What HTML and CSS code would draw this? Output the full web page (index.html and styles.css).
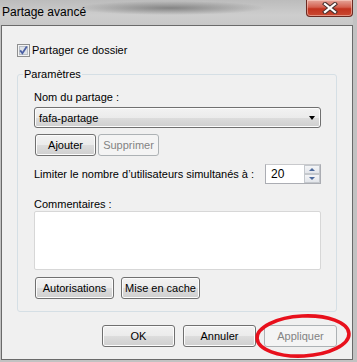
FILE: index.html
```html
<!DOCTYPE html>
<html>
<head lang="fr">
    <meta charset="UTF-8">
    <title>Partage avancé</title>
    <link rel="stylesheet" href="styles.css">
</head>
<body>
<div class="window">
    <div class="titlebar">
        <span class="title">Partage avancé</span>
        <span class="close">
            <svg width="16" height="12" viewBox="0 0 16 12">
                <path d="M3 2 L13 10 M13 2 L3 10" stroke="#4a3330" stroke-width="4.2" stroke-linecap="square"/>
                <path d="M3 2 L13 10 M13 2 L3 10" stroke="#ffffff" stroke-width="2.2" stroke-linecap="square"/>
            </svg>
        </span>
    </div>
    <div class="panel">
        <label class="check-row">
            <span class="checkbox">
                <svg width="13" height="13" viewBox="0 0 13 13">
                    <rect x="0.5" y="0.5" width="12" height="12" fill="#f4f4f4" stroke="#8e8f8f"/>
                    <rect x="2.5" y="2.5" width="8" height="8" fill="#dfe3e8" stroke="#b8bec6"/>
                    <path d="M3.2 6.4 L5.4 9.2 L9.8 2.6" fill="none" stroke="#4c61a5" stroke-width="1.8"/>
                </svg>
            </span>
            Partager ce dossier
        </label>
        <fieldset class="group">
            <legend>Paramètres</legend>
            <div class="group-body">
                <div class="label">Nom du partage :</div>
                <div class="select">
                    <span>fafa-partage</span>
                    <span class="arrow"></span>
                </div>
                <div class="btn-row">
                    <span class="btn small">Ajouter</span>
                    <span class="btn small disabled">Supprimer</span>
                </div>
                <div class="limit-row">
                    <span>Limiter le nombre d’utilisateurs simultanés à :</span>
                    <div class="spin">
                        <span class="spin-value">20</span>
                        <span class="spin-btns">
                            <span class="spin-up"><i></i></span>
                            <span class="spin-down"><i></i></span>
                        </span>
                    </div>
                </div>
                <div class="label comments-label">Commentaires :</div>
                <div class="textarea"></div>
                <div class="btn-row wide">
                    <span class="btn mid">Autorisations</span>
                    <span class="btn mid">Mise en cache</span>
                </div>
            </div>
        </fieldset>
        <div class="footer">
            <span class="btn big">OK</span>
            <span class="btn big">Annuler</span>
            <span class="btn big disabled">Appliquer</span>
        </div>
    </div>
    <svg class="circle" width="104" height="52" viewBox="0 0 104 52">
        <ellipse cx="51" cy="25" rx="46" ry="20" transform="rotate(-3 51 25)" fill="none" stroke="#e8101c" stroke-width="3.6"/>
    </svg>
</div>
</body>
</html>
```

FILE: styles.css
```css
* {
    margin: 0;
    padding: 0;
    box-sizing: border-box;
}

body {
    background: #c4c4c4;
    font-family: "Liberation Sans", Arial, sans-serif;
    font-size: 11px;
    color: #000000;
    white-space: nowrap;
}

.window {
    position: relative;
    width: 357px;
    height: 362px;
    padding-right: 4px;
    background: #c2c2c2;
    overflow: hidden;
}

.titlebar {
    height: 25px;
    display: flex;
    justify-content: space-between;
    align-items: flex-start;
    background: radial-gradient(ellipse 95px 7px at 170px 8px, rgba(110, 110, 110, 0.75), rgba(110, 110, 110, 0)),
                linear-gradient(#bcbcbc, #cdcdcd 60%, #c8c8c8);
}

.title {
    padding: 5px 0 0 2px;
    line-height: 15px;
    font-size: 12px;
}

.close {
    width: 47px;
    height: 17px;
    display: flex;
    align-items: center;
    justify-content: center;
    border: 1px solid #6b2a22;
    border-top: none;
    border-radius: 0 0 4px 4px;
    background: linear-gradient(#e6a59a, #d4604f 45%, #c2331f 55%, #c94a33);
    box-shadow: inset 0 0 0 1px rgba(255, 220, 210, 0.5);
}

.panel {
    margin-left: 1px;
    width: 352px;
    height: 335px;
    border: 1px solid #6a6a6a;
    background: #f0f0f0;
    padding: 17px 15px 0 15px;
}

.check-row {
    display: flex;
    align-items: center;
    height: 15px;
    line-height: 15px;
}

.checkbox {
    width: 13px;
    height: 13px;
    margin-right: 2px;
    display: flex;
}

.group {
    margin-top: 8px;
    width: 320px;
    border: 1px solid #d5dfe5;
    border-radius: 3px;
    padding: 0 0 0 5px;
}

.group legend {
    padding: 0 1px;
    line-height: 16px;
}

.group-body {
    padding: 0 0 12px 11px;
}

.label {
    margin-top: 8px;
    line-height: 15px;
}

.select {
    margin-top: 2px;
    width: 287px;
    height: 21px;
    border: 1px solid #707070;
    border-radius: 3px;
    background: linear-gradient(#f2f2f2, #ebebeb 50%, #dddddd 50%, #cfcfcf);
    box-shadow: inset 0 0 0 1px #fcfcfc;
    display: flex;
    justify-content: space-between;
    align-items: center;
    padding: 0 5px 0 4px;
}

.arrow {
    width: 0;
    height: 0;
    border-left: 3.5px solid transparent;
    border-right: 3.5px solid transparent;
    border-top: 4px solid #000000;
}

.btn-row {
    margin-top: 6px;
    padding-left: 1px;
    display: flex;
    gap: 2px;
}

.btn-row.wide {
    margin-top: 7px;
    gap: 7px;
}

.btn {
    height: 22px;
    display: flex;
    align-items: center;
    justify-content: center;
    border: 1px solid #707070;
    border-radius: 3px;
    background: linear-gradient(#f2f2f2, #ebebeb 50%, #dddddd 50%, #cfcfcf);
    box-shadow: inset 0 0 0 1px #fcfcfc;
}

.btn.disabled {
    border-color: #adb2b5;
    background: #f4f4f4;
    box-shadow: none;
    color: #838383;
}

.btn.small {
    width: 61px;
}

.btn.mid {
    width: 79px;
}

.btn.big {
    width: 73px;
}

.limit-row {
    margin-top: 8px;
    width: 287px;
    height: 20px;
    display: flex;
    justify-content: space-between;
    align-items: center;
}

.spin {
    width: 56px;
    height: 20px;
    border: 1px solid #abadb3;
    border-top-color: #c8c9cc;
    background: #ffffff;
    display: flex;
    justify-content: space-between;
}

.spin-value {
    padding-left: 5px;
    line-height: 18px;
    font-size: 12px;
}

.spin-btns {
    width: 16px;
    display: flex;
    flex-direction: column;
}

.spin-up, .spin-down {
    flex: 1;
    border: 1px solid #c4c8cd;
    background: linear-gradient(#f4f5f7, #e2e5ea);
    display: flex;
    align-items: center;
    justify-content: center;
}

.spin-up i {
    border-left: 3px solid transparent;
    border-right: 3px solid transparent;
    border-bottom: 3px solid #4d6a9c;
}

.spin-down i {
    border-left: 3px solid transparent;
    border-right: 3px solid transparent;
    border-top: 3px solid #4d6a9c;
}

.comments-label {
    margin-top: 13px;
    line-height: 14px;
}

.textarea {
    width: 287px;
    height: 59px;
    border: 1px solid #d7d7d7;
    border-radius: 2px;
    background: #ffffff;
}

.footer {
    margin-top: 13px;
    width: 320px;
    display: flex;
    justify-content: flex-end;
    gap: 8px;
}

.circle {
    position: absolute;
    left: 252px;
    top: 311px;
}
```
